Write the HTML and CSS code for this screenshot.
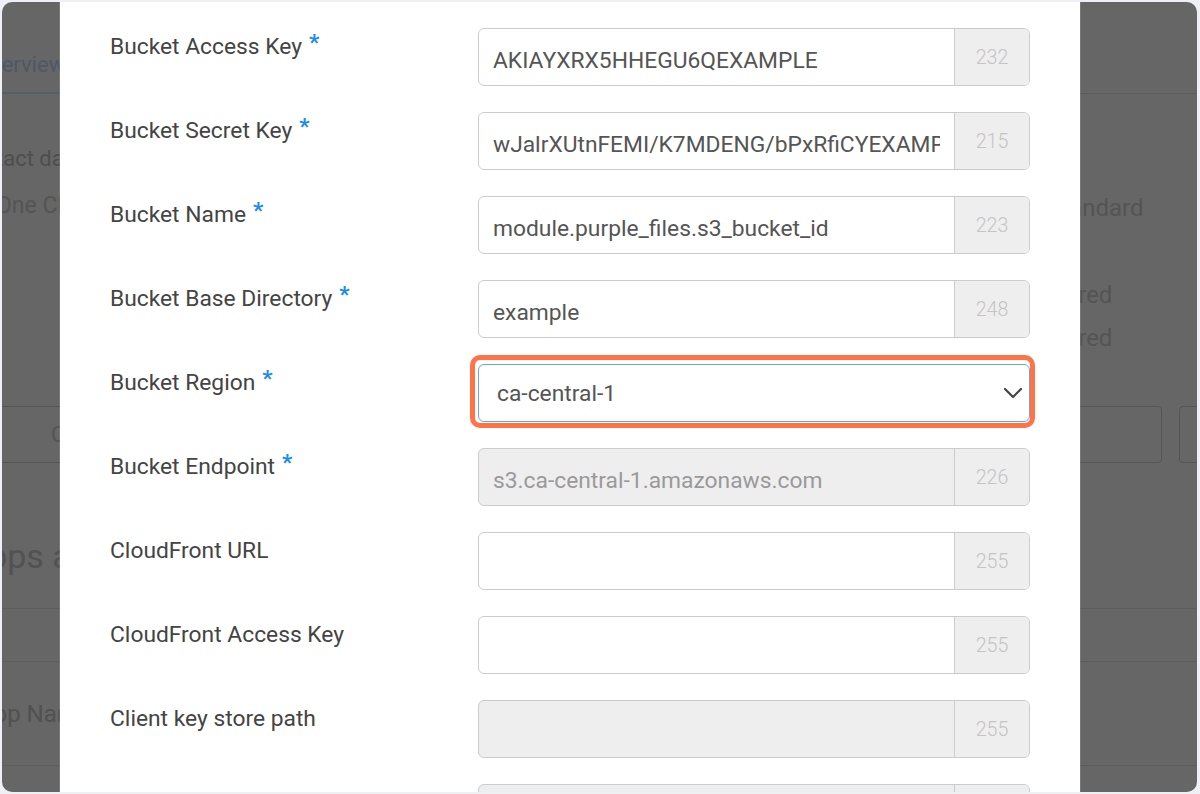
FILE: index.html
```html
<!DOCTYPE html>
<html lang="en">
<head>
<meta charset="utf-8">
<title>Storage settings</title>
<link rel="stylesheet" href="styles.css">
</head>
<body>
<div class="screen">
  <div class="page">
    <div class="tabs">
      <span class="tab active">Overview</span>
    </div>
    <div class="summary">
      <div class="sum-left">
        <div class="sum-label">Contact data</div>
        <div class="sum-value">One Click Deploy</div>
      </div>
      <div class="sum-mid"></div>
      <div class="sum-right">
        <div class="sum-value">Standard</div>
        <div class="sum-value gap-lg shift">Required</div>
        <div class="sum-value gap-sm shift">Required</div>
      </div>
    </div>
    <div class="actions">
      <div class="act-left"><span class="btn btn-wide">Configure</span></div>
      <div class="act-mid"></div>
      <div class="act-right"><span class="btn btn-a">Edit</span><span class="btn btn-b">Delete</span></div>
    </div>
    <h2 class="heading">Apps and Services</h2>
    <div class="table">
      <div class="trow thead"></div>
      <div class="trow"><span class="cell">App Name</span></div>
    </div>
  </div>

  <div class="overlay"></div>

  <div class="modal">
    <div class="form">
      <div class="label">Bucket Access Key<span class="req">*</span></div>
      <div class="field"><input class="input" type="text" value="AKIAYXRX5HHEGU6QEXAMPLE"><span class="count">232</span></div>

      <div class="label">Bucket Secret Key<span class="req">*</span></div>
      <div class="field"><input class="input" type="text" value="wJalrXUtnFEMI/K7MDENG/bPxRfiCYEXAMPLEKEY"><span class="count">215</span></div>

      <div class="label">Bucket Name<span class="req">*</span></div>
      <div class="field"><input class="input" type="text" value="module.purple_files.s3_bucket_id"><span class="count">223</span></div>

      <div class="label">Bucket Base Directory<span class="req">*</span></div>
      <div class="field"><input class="input" type="text" value="example"><span class="count">248</span></div>

      <div class="label">Bucket Region<span class="req">*</span></div>
      <div class="select">
        <span class="select-value">ca-central-1</span>
        <svg class="chevron" width="20" height="12" viewBox="0 0 20 12"><path d="M2 2l8 8 8-8" fill="none" stroke="#444" stroke-width="2.2" stroke-linecap="round" stroke-linejoin="round"/></svg>
      </div>

      <div class="label">Bucket Endpoint<span class="req">*</span></div>
      <div class="field disabled"><input class="input" type="text" value="s3.ca-central-1.amazonaws.com" disabled><span class="count">226</span></div>

      <div class="label">CloudFront URL</div>
      <div class="field"><input class="input" type="text" value=""><span class="count">255</span></div>

      <div class="label">CloudFront Access Key</div>
      <div class="field"><input class="input" type="text" value=""><span class="count">255</span></div>

      <div class="label">Client key store path</div>
      <div class="field disabled"><input class="input" type="text" value="" disabled><span class="count">255</span></div>

      <div class="label">Allowed client key types</div>
      <div class="field disabled"><input class="input" type="text" value="" disabled><span class="count">255</span></div>
    </div>
  </div>
</div>
</body>
</html>
```

FILE: styles.css
```css
* { box-sizing: border-box; }

html, body {
  margin: 0;
  padding: 0;
  background: #eff0f5;
  font-family: Roboto, "Noto Sans", "Liberation Sans", sans-serif;
}

.screen {
  position: relative;
  width: 1195px;
  height: 790px;
  margin: 2px 3px 2px 2px;
  border-radius: 10px;
  overflow: hidden;
  background: #ffffff;
}

/* ---------- underlying page (dimmed by overlay) ---------- */
.page {
  margin-left: -36px;
  width: 1300px;
  color: #d4d4d4;
}

.tabs {
  height: 92px;
  border-bottom: 1px solid #e8e8e8;
  display: flex;
  align-items: flex-end;
}

.tab {
  font-size: 22px;
  line-height: 26px;
  padding: 0 14px 14px 10px;
  color: #c3dcff;
  margin-bottom: -1px;
}

.tab.active {
  border-bottom: 2px solid #d4eeff;
}

.summary {
  display: grid;
  grid-template-columns: 500px 581px 1fr;
  height: 312px;
}

.sum-left { padding-top: 52px; }
.sum-right { padding-top: 99px; }

.sum-label {
  font-size: 22px;
  line-height: 26px;
  margin-left: -9px;
  color: #c4c4c4;
}

.sum-value {
  font-size: 24px;
  line-height: 30px;
  margin-top: 19px;
  margin-left: 30px;
  color: #d2d2d2;
}

.sum-left .sum-value { font-size: 23px; }
.sum-right .sum-value { margin-top: 0; margin-left: 0; }
.sum-right .gap-lg { margin-top: 57px; }
.sum-right .gap-sm { margin-top: 13px; }
.sum-right .shift { margin-left: -29px; }

.actions {
  display: grid;
  grid-template-columns: 500px 581px 1fr;
  height: 57px;
}

.btn {
  display: inline-flex;
  align-items: center;
  justify-content: center;
  height: 57px;
  border: 1px solid #d4d4d4;
  border-radius: 4px;
  font-size: 22px;
  color: #d2d2d2;
}

.btn-wide {
  width: 300px;
  margin-left: -40px;
  justify-content: flex-start;
  padding-left: 124px;
}

.act-right { display: flex; gap: 17px; margin-left: -119px; }
.btn-a { width: 234px; }
.btn-b { width: 150px; }

.heading {
  margin: 73px 0 0;
  padding-left: 0;
  font-size: 34px;
  line-height: 40px;
  font-weight: 400;
  color: #cccccc;
}

.table {
  margin-top: 32px;
  border-top: 1px solid #e8e8e8;
}

.trow {
  border-bottom: 1px solid #e8e8e8;
  display: flex;
  align-items: center;
}

.thead { height: 53px; }
.trow:not(.thead) { height: 104px; }

.cell {
  font-size: 24px;
  padding-left: 12px;
  color: #cacaca;
}

.overlay {
  position: absolute;
  inset: 0;
  background: rgba(0, 0, 0, 0.6);
}

/* ---------- modal ---------- */
.modal {
  position: absolute;
  top: 0;
  bottom: 0;
  left: 58px;
  width: 1020px;
  background: #ffffff;
  box-shadow: 0 0 0 1px rgba(255, 255, 255, 0.12);
  padding: 26px 50px 0;
}

.form {
  display: grid;
  grid-template-columns: 368px 552px;
  grid-auto-rows: 58px;
  row-gap: 26px;
}

.label {
  padding-top: 5px;
  font-size: 22.8px;
  line-height: 1.2;
  font-weight: 400;
  color: #444444;
}

.req {
  color: #1a8cf0;
  font-weight: 700;
  margin-left: 7px;
  line-height: 0;
  vertical-align: 4px;
}

.field {
  display: flex;
  height: 58px;
  border: 1px solid #cccccc;
  border-radius: 6px;
  overflow: hidden;
  background: #ffffff;
}

.field.disabled { background: #eeeeee; }

.input {
  flex: 1;
  min-width: 0;
  height: 100%;
  border: 0;
  outline: none;
  background: transparent;
  padding: 6px 14px 0;
  font-family: Roboto, "Noto Sans", "Liberation Sans", sans-serif;
  font-size: 22.8px;
  font-weight: 400;
  color: #555555;
}

.field.disabled .input { color: #9a9a9a; }

.count {
  width: 75px;
  flex: none;
  display: flex;
  align-items: center;
  justify-content: center;
  border-left: 1px solid #cccccc;
  background: #eeeeee;
  font-size: 19.6px;
  font-weight: 300;
  color: #c4c4c4;
}

.select {
  position: relative;
  height: 58px;
  display: flex;
  align-items: center;
  justify-content: space-between;
  border: 1px solid #66a8e6;
  border-radius: 6px;
  padding: 1px 6px 0 18px;
  font-size: 22.8px;
  font-weight: 400;
  color: #555555;
}

.select::after {
  content: "";
  position: absolute;
  top: -10px;
  left: -9px;
  right: -6px;
  bottom: -7px;
  border: 5px solid #ff7346;
  border-radius: 10px;
  pointer-events: none;
}

.chevron { display: block; margin-top: -2px; }
```
